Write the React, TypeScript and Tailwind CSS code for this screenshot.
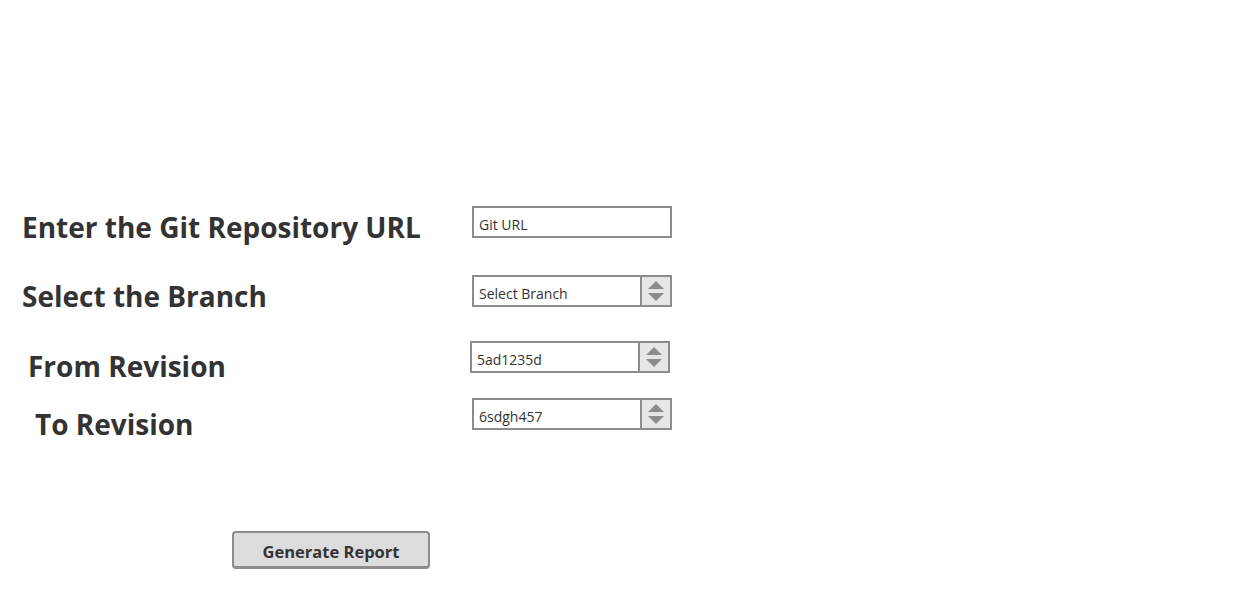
import React from "react";

const font = { fontFamily: '"Open Sans", "Noto Sans", sans-serif' };

function Spinner() {
  return (
    <div className="flex h-full w-[30px] items-center justify-center border-l-2 border-[#8c8c8c] bg-[#e6e6e6]">
      <svg width="18" height="22" viewBox="0 0 18 22">
        <polygon points="9,1 17,9 1,9" fill="#8c8c8c" />
        <polygon points="1,13 17,13 9,21" fill="#8c8c8c" />
      </svg>
    </div>
  );
}

function Field({ text, spinner }: { text: string; spinner?: boolean }) {
  return (
    <div className="flex h-[32px] w-[200px] items-stretch border-2 border-[#8c8c8c] bg-white">
      <div className="flex flex-1 items-center pl-[5px] pt-[4px] text-[14px] text-[#333]">{text}</div>
      {spinner && <Spinner />}
    </div>
  );
}

export default function App() {
  return (
    <div className="h-[600px] w-[1260px] bg-white text-[#333]" style={font}>
      <div className="pt-[206px]">
        <div className="flex h-[69px]">
          <div className="ml-[22px] mt-[1px] w-[450px] text-[28px] font-bold leading-[40px]">Enter the Git Repository URL</div>
          <Field text="Git URL" />
        </div>
        <div className="flex h-[66px]">
          <div className="ml-[22px] mt-[1px] w-[450px] text-[28px] font-bold leading-[40px]">Select the Branch</div>
          <Field text="Select Branch" spinner />
        </div>
        <div className="flex h-[57px]">
          <div className="ml-[28px] mt-[5px] w-[442px] text-[28px] font-bold leading-[40px]">From Revision</div>
          <Field text="5ad1235d" spinner />
        </div>
        <div className="flex h-[133px]">
          <div className="ml-[35px] mt-[6px] w-[437px] text-[28px] font-bold leading-[40px]">To Revision</div>
          <Field text="6sdgh457" spinner />
        </div>
        <div className="pl-[232px]">
          <button className="flex h-[38px] w-[198px] items-center justify-center rounded-[4px] border-2 border-b-[3px] border-[#8c8c8c] bg-[#dcdcdc] pt-[5px] text-[16.5px] font-bold text-[#333]">
            Generate Report
          </button>
        </div>
      </div>
    </div>
  );
}
